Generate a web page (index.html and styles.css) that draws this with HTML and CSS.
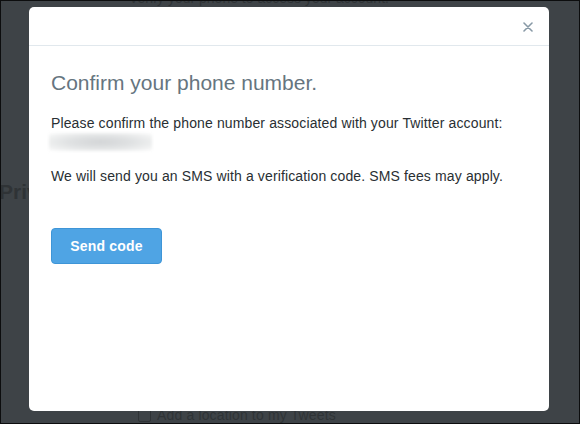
FILE: index.html
```html
<!DOCTYPE html>
<html>
<head>
<meta charset="utf-8">
<link rel="stylesheet" href="styles.css">
</head>
<body>
<div class="frame">
  <div class="page">
    <div class="page-top">Verify your phone to access your account.</div>
    <div class="page-heading">Privacy</div>
    <label class="page-check"><span class="box"></span>Add a location to my Tweets</label>
  </div>
  <div class="modal">
    <div class="modal-header">
      <button class="close" aria-label="Close">
        <svg width="10" height="10" viewBox="0 0 10 10"><path d="M1 1L9 9M9 1L1 9" stroke="#8899a6" stroke-width="1.6" stroke-linecap="round"/></svg>
      </button>
    </div>
    <div class="modal-body">
      <h2 class="title">Confirm your phone number.</h2>
      <p class="text">Please confirm the phone number associated with your Twitter account:</p>
      <div class="blurred"></div>
      <p class="text sms">We will send you an SMS with a verification code. SMS fees may apply.</p>
      <button class="send">Send code</button>
    </div>
  </div>
</div>
</body>
</html>
```

FILE: styles.css
```css
html, body {
  margin: 0;
  padding: 0;
}
body {
  font-family: "Liberation Sans", Arial, sans-serif;
  background: #000;
}
.frame {
  position: relative;
  width: 580px;
  height: 424px;
  box-sizing: border-box;
  border: 1px solid #0c0d0e;
  background: #3e4347;
  overflow: hidden;
}
.page {
  position: relative;
  height: 100%;
  color: #2f3336;
}
.page-top {
  position: absolute;
  left: 128px;
  top: -11px;
  font-size: 14px;
}
.page-heading {
  position: absolute;
  left: -2px;
  top: 179px;
  font-size: 21px;
  font-weight: bold;
}
.page-check {
  position: absolute;
  left: 137px;
  top: 406px;
  font-size: 14px;
  letter-spacing: 0.15px;
  display: flex;
  align-items: center;
  gap: 6px;
}
.page-check .box {
  width: 11px;
  height: 11px;
  border: 1px solid #2f3336;
  border-radius: 2px;
}
.modal {
  position: absolute;
  left: 28px;
  top: 6px;
  width: 520px;
  height: 404px;
  background: #fff;
  border-radius: 5px;
  overflow: hidden;
}
.modal-header {
  height: 38px;
  border-bottom: 1px solid #e1e8ed;
  display: flex;
  justify-content: flex-end;
  align-items: center;
  padding-right: 14px;
}
.close {
  border: 0;
  background: none;
  padding: 0;
  width: 14px;
  height: 14px;
  display: flex;
  align-items: center;
  justify-content: center;
  margin-top: 1px;
}
.modal-body {
  padding: 24px 22px 0 22px;
}
.title {
  margin: 0;
  font-size: 21px;
  font-weight: normal;
  color: #66757f;
  line-height: 25px;
}
.text {
  margin: 0;
  font-size: 14px;
  line-height: 18px;
  letter-spacing: 0.13px;
  color: #292f33;
}
.title + .text {
  margin-top: 19px;
}
.blurred {
  width: 103px;
  height: 18px;
  margin: 1px 0 0 -2px;
  background: radial-gradient(ellipse at center, #d2d4d6 0%, #e0e2e3 45%, #f3f4f4 85%, #fff 100%);
  filter: blur(1.5px);
}
.sms {
  margin-top: 16px;
}
.send {
  margin-top: 43px;
  width: 111px;
  height: 36px;
  background: #4fa4e4;
  border: 1px solid #3e95d7;
  border-radius: 4px;
  color: #fff;
  font-family: "Liberation Sans", Arial, sans-serif;
  font-weight: bold;
  font-size: 14px;
  letter-spacing: 0.2px;
  padding: 0;
}
```
